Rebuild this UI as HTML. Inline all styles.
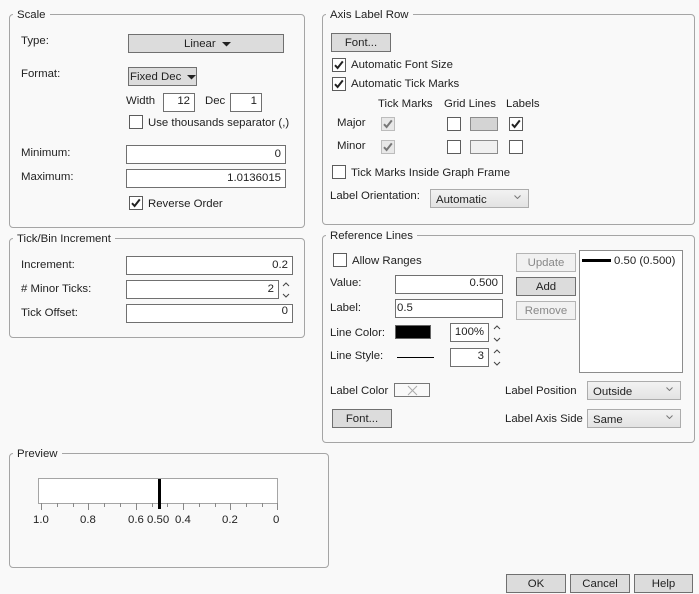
<!DOCTYPE html>
<html><head><meta charset="utf-8">
<style>
html,body{margin:0;padding:0;background:#f9f9f9;}
#p{position:relative;width:699px;height:594px;overflow:hidden;background:#f9f9f9;font-family:"Liberation Sans",sans-serif;font-size:11.4px;color:#222;}
#p div,#p svg{position:absolute;box-sizing:border-box;}
.g{border:1px solid #a5a5a5;border-radius:4px;}
.gt{background:#f9f9f9;padding:0 4px;line-height:18px;height:16px;white-space:nowrap;overflow:hidden;}
.t{line-height:18px;height:18px;white-space:nowrap;}
.i{background:#fff;border:1px solid #707070;line-height:14px;text-align:right;padding:0 4px;white-space:nowrap;}
.l{line-height:16px;}
.b{background:#dcdcdc;border:1px solid #707070;text-align:center;line-height:19px;white-space:nowrap;}
.d{background:#f1f1f1;border:1px solid #b4b4b4;color:#888;text-align:center;line-height:19px;}
.s{background:linear-gradient(#f2f2f2,#e3e3e3);border:1px solid #acacac;line-height:20px;padding-left:5px;white-space:nowrap;}
.c{width:14px;height:14px;background:#fff;border:1px solid #5c5c5c;}
.cd{width:14px;height:14px;background:#e8e8e8;border:1px solid #bcbcbc;}
</style></head><body>
<div id="p">
<svg width="0" height="0" style="position:absolute"><defs>
<symbol id="ck" viewBox="0 0 14 14"><path d="M3 7.2 L5.6 10 L10.8 3.4" fill="none" stroke="currentColor" stroke-width="2"/></symbol>
<symbol id="up" viewBox="0 0 8 5"><path d="M1 4 L4 1 L7 4" fill="none" stroke="#444" stroke-width="1"/></symbol>
<symbol id="dn" viewBox="0 0 8 5"><path d="M1 1 L4 4 L7 1" fill="none" stroke="#444" stroke-width="1"/></symbol>
<symbol id="ch" viewBox="0 0 7 4"><path d="M.5 .5 L3.5 3.5 L6.5 .5" fill="none" stroke="#777" stroke-width="1"/></symbol>
</defs></svg>

<!-- Scale -->
<div class="g" style="left:9px;top:14px;width:296px;height:214px"></div>
<div class="gt" style="left:13px;top:6px">Scale</div>
<div class="t" style="left:21px;top:32px">Type:</div>
<div class="b" style="left:128px;top:34px;width:156px;height:19px;text-align:left;padding-left:55px">Linear<svg style="left:93px;top:7px" width="9" height="5"><path d="M0 0H9L4.5 4.5Z" fill="#222"/></svg></div>
<div class="t" style="left:21px;top:65px">Format:</div>
<div class="b" style="left:128px;top:67px;width:69px;height:19px;text-align:left;padding-left:1px">Fixed Dec<svg style="left:58px;top:7px" width="9" height="5"><path d="M0 0H9L4.5 4.5Z" fill="#222"/></svg></div>
<div class="t" style="left:126px;top:92px">Width</div>
<div class="i" style="left:163px;top:93px;width:32px;height:19px">12</div>
<div class="t" style="left:205px;top:92px">Dec</div>
<div class="i" style="left:230px;top:93px;width:32px;height:19px">1</div>
<div class="c" style="left:129px;top:115px"></div>
<div class="t" style="left:148px;top:114px">Use thousands separator (,)</div>
<div class="t" style="left:21px;top:144px">Minimum:</div>
<div class="i l" style="left:126px;top:145px;width:160px;height:19px">0</div>
<div class="t" style="left:21px;top:168px">Maximum:</div>
<div class="i l" style="left:126px;top:169px;width:160px;height:19px">1.0136015</div>
<div class="c" style="left:129px;top:196px;color:#222"><svg style="left:-1px;top:-1px" width="14" height="14"><use href="#ck"/></svg></div>
<div class="t" style="left:148px;top:195px">Reverse Order</div>

<!-- Tick/Bin -->
<div class="g" style="left:9px;top:238px;width:296px;height:100px"></div>
<div class="gt" style="left:13px;top:230px">Tick/Bin Increment</div>
<div class="t" style="left:21px;top:256px">Increment:</div>
<div class="i l" style="left:126px;top:256px;width:167px;height:19px">0.2</div>
<div class="t" style="left:21px;top:280px"># Minor Ticks:</div>
<div class="i l" style="left:126px;top:280px;width:153px;height:19px">2</div>
<svg style="left:282px;top:282px" width="8" height="5"><use href="#up"/></svg>
<svg style="left:282px;top:293px" width="8" height="5"><use href="#dn"/></svg>
<div class="t" style="left:21px;top:304px">Tick Offset:</div>
<div class="i" style="left:126px;top:304px;width:167px;height:19px;line-height:13px">0</div>

<!-- Axis Label Row -->
<div class="g" style="left:322px;top:14px;width:373px;height:211px"></div>
<div class="gt" style="left:326px;top:6px">Axis Label Row</div>
<div class="b" style="left:331px;top:33px;width:60px;height:19px">Font...</div>
<div class="c" style="left:332px;top:58px;color:#222"><svg style="left:-1px;top:-1px" width="14" height="14"><use href="#ck"/></svg></div>
<div class="t" style="left:351px;top:56px">Automatic Font Size</div>
<div class="c" style="left:332px;top:77px;color:#222"><svg style="left:-1px;top:-1px" width="14" height="14"><use href="#ck"/></svg></div>
<div class="t" style="left:351px;top:75px">Automatic Tick Marks</div>
<div class="t" style="left:378px;top:95px">Tick Marks</div>
<div class="t" style="left:444px;top:95px">Grid Lines</div>
<div class="t" style="left:506px;top:95px">Labels</div>
<div class="t" style="left:337px;top:114px">Major</div>
<div class="cd" style="left:381px;top:117px;color:#777"><svg style="left:-1px;top:-1px" width="14" height="14"><use href="#ck"/></svg></div>
<div class="c" style="left:447px;top:117px"></div>
<div style="left:470px;top:117px;width:28px;height:14px;background:#d4d4d4;border:1px solid #8c8c8c"></div>
<div class="c" style="left:509px;top:117px;color:#222"><svg style="left:-1px;top:-1px" width="14" height="14"><use href="#ck"/></svg></div>
<div class="t" style="left:337px;top:137px">Minor</div>
<div class="cd" style="left:381px;top:140px;color:#777"><svg style="left:-1px;top:-1px" width="14" height="14"><use href="#ck"/></svg></div>
<div class="c" style="left:447px;top:140px"></div>
<div style="left:470px;top:140px;width:28px;height:14px;background:#f0f0f0;border:1px solid #8c8c8c"></div>
<div class="c" style="left:509px;top:140px"></div>
<div class="c" style="left:332px;top:165px"></div>
<div class="t" style="left:351px;top:164px">Tick Marks Inside Graph Frame</div>
<div class="t" style="left:330px;top:187px">Label Orientation:</div>
<div class="s" style="left:430px;top:189px;width:99px;height:19px">Automatic<svg style="right:7px;top:5px" width="7" height="4"><use href="#ch"/></svg></div>

<!-- Reference Lines -->
<div class="g" style="left:322px;top:235px;width:373px;height:208px"></div>
<div class="gt" style="left:326px;top:227px">Reference Lines</div>
<div class="c" style="left:333px;top:253px"></div>
<div class="t" style="left:352px;top:252px">Allow Ranges</div>
<div class="d" style="left:516px;top:253px;width:60px;height:19px">Update</div>
<div class="b" style="left:516px;top:277px;width:60px;height:19px">Add</div>
<div class="d" style="left:516px;top:301px;width:60px;height:19px">Remove</div>
<div style="left:579px;top:250px;width:104px;height:123px;background:#fff;border:1px solid #8c8c8c"></div>
<div style="left:582px;top:259px;width:29px;height:3px;background:#000"></div>
<div class="t" style="left:614px;top:252px">0.50 (0.500)</div>
<div class="t" style="left:330px;top:274px">Value:</div>
<div class="i" style="left:395px;top:275px;width:108px;height:19px">0.500</div>
<div class="t" style="left:330px;top:299px">Label:</div>
<div class="i l" style="left:395px;top:299px;width:108px;height:19px;text-align:left;padding-left:1px">0.5</div>
<div class="t" style="left:330px;top:324px">Line Color:</div>
<div style="left:395px;top:325px;width:36px;height:14px;background:#000;border:1px solid #666"></div>
<div class="i l" style="left:450px;top:323px;width:39px;height:19px;padding:0 3px;text-align:center">100%</div>
<svg style="left:493px;top:325px" width="8" height="5"><use href="#up"/></svg>
<svg style="left:493px;top:337px" width="8" height="5"><use href="#dn"/></svg>
<div class="t" style="left:330px;top:347px">Line Style:</div>
<div style="left:397px;top:357px;width:37px;height:1px;background:#000"></div>
<div class="i" style="left:450px;top:348px;width:39px;height:19px">3</div>
<svg style="left:493px;top:349px" width="8" height="5"><use href="#up"/></svg>
<svg style="left:493px;top:361px" width="8" height="5"><use href="#dn"/></svg>
<div class="t" style="left:330px;top:382px">Label Color</div>
<div style="left:394px;top:383px;width:36px;height:14px;background:#f9f9f9;border:1px solid #777"><svg style="left:12px;top:1px" width="11" height="11"><path d="M1 1 L10 10 M10 1 L1 10" stroke="#aaa" stroke-width="1" fill="none"/></svg></div>
<div class="t" style="left:505px;top:382px">Label Position</div>
<div class="s" style="left:587px;top:381px;width:94px;height:19px">Outside<svg style="right:7px;top:5px" width="7" height="4"><use href="#ch"/></svg></div>
<div class="b" style="left:332px;top:409px;width:60px;height:19px">Font...</div>
<div class="t" style="left:505px;top:410px">Label Axis Side</div>
<div class="s" style="left:587px;top:409px;width:94px;height:19px">Same<svg style="right:7px;top:5px" width="7" height="4"><use href="#ch"/></svg></div>

<!-- Preview -->
<div class="g" style="left:9px;top:453px;width:320px;height:115px"></div>
<div class="gt" style="left:13px;top:445px">Preview</div>
<div style="left:38px;top:478px;width:240px;height:26px;background:#fff;border:1px solid #a5a5a5"></div>
<svg style="left:38px;top:503px" width="242" height="8">
<path d="M3.5 0V7M50.5 0V7M98.5 0V7M145.5 0V7M192.5 0V7M239.5 0V7M19.5 0V4M35.5 0V4M66.5 0V4M82.5 0V4M114.5 0V4M129.5 0V4M161.5 0V4M177.5 0V4M208.5 0V4M224.5 0V4" stroke="#888" stroke-width="1" fill="none"/>
</svg>
<div style="left:158px;top:479px;width:3px;height:30px;background:#000"></div>
<div class="t" style="left:33px;top:511px">1.0</div>
<div class="t" style="left:80px;top:511px">0.8</div>
<div class="t" style="left:128px;top:511px">0.6</div>
<div class="t" style="left:147px;top:511px">0.50</div>
<div class="t" style="left:175px;top:511px">0.4</div>
<div class="t" style="left:222px;top:511px">0.2</div>
<div class="t" style="left:273px;top:511px">0</div>

<!-- Buttons -->
<div class="b" style="left:506px;top:574px;width:60px;height:19px">OK</div>
<div class="b" style="left:570px;top:574px;width:60px;height:19px">Cancel</div>
<div class="b" style="left:634px;top:574px;width:59px;height:19px">Help</div>
</div>
</body></html>
